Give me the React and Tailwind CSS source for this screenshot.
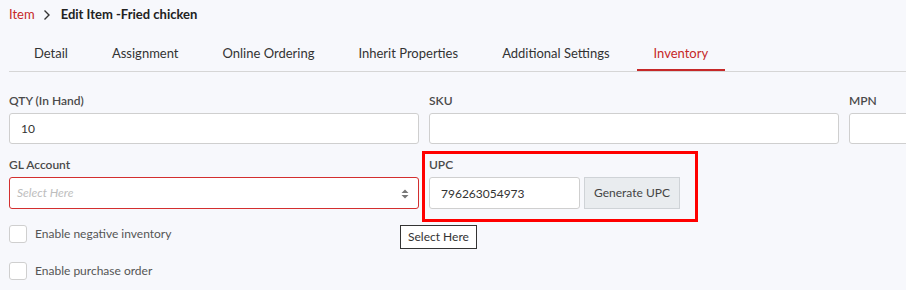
import { useState } from "react";

const tabs = ["Detail", "Assignment", "Online Ordering", "Inherit Properties", "Additional Settings", "Inventory"];

function Field({ label, children }) {
  return (
    <div className="flex flex-col">
      <label className="text-[12px] leading-[15px] font-semibold text-[#4a4a4a] mb-[5px]">{label}</label>
      {children}
    </div>
  );
}

function Check({ label }) {
  const [checked, setChecked] = useState(false);
  return (
    <label className="flex items-center gap-[8px] h-[18px]">
      <input
        type="checkbox"
        checked={checked}
        onChange={(e) => setChecked(e.target.checked)}
        className="appearance-none w-[18px] h-[18px] rounded-[3px] border border-[#cfcfcf] bg-white"
      />
      <span className="text-[12px] text-[#555]">{label}</span>
    </label>
  );
}

function App() {
  const [active, setActive] = useState("Inventory");
  const [qty, setQty] = useState("10");
  const [upc, setUpc] = useState("796263054973");

  return (
    <div className="w-[906px] h-[290px] overflow-hidden bg-[#f7f8fc] px-[9px] text-[#333]" style={{ fontFamily: "Lato, 'Open Sans', sans-serif" }}>
      <div className="flex items-center h-[28px] pt-[1px] text-[13px]">
        <span className="text-[#c62828]">Item</span>
        <svg className="ml-[8px] mr-[10px]" width="8" height="12" viewBox="0 0 8 12">
          <path d="M1.5 1.5 L6 6 L1.5 10.5" fill="none" stroke="#333" strokeWidth="1.4" />
        </svg>
        <span className="font-bold text-[#222]">Edit Item -Fried chicken</span>
      </div>

      <div className="flex gap-[10px] pl-[8px] mt-[10px] border-b border-[#d6d6d6] w-[1200px]">
        {tabs.map((t) => (
          <button
            key={t}
            onClick={() => setActive(t)}
            className={
              t === active
                ? "px-[17px] h-[33px] text-[13px] text-[#c62828] border-b-2 border-[#c62828]"
                : "px-[17px] h-[33px] text-[13px] text-[#333] border-b-2 border-transparent"
            }
          >
            {t}
          </button>
        ))}
      </div>

      <div className="grid grid-cols-[410px_410px_410px] gap-x-[10px] gap-y-[13px] mt-[21px]">
        <Field label="QTY (In Hand)">
          <input
            value={qty}
            onChange={(e) => setQty(e.target.value)}
            className="h-[31px] bg-white border border-[#cfcfcf] rounded-[3px] px-[11px] text-[12px] text-[#333] outline-none"
          />
        </Field>
        <Field label="SKU">
          <input className="h-[31px] bg-white border border-[#cfcfcf] rounded-[3px] px-[11px] text-[12px] outline-none" />
        </Field>
        <Field label="MPN">
          <input className="h-[31px] bg-white border border-[#cfcfcf] rounded-[3px] px-[11px] text-[12px] outline-none" />
        </Field>

        <Field label="GL Account">
          <div className="relative h-[32px] bg-white border border-[#d32f2f] rounded-[3px] flex items-center px-[7px]">
            <span className="italic text-[12px] text-[#bdbdbd]">Select Here</span>
            <svg className="absolute right-[9px] top-[11px]" width="8" height="10" viewBox="0 0 8 10">
              <path d="M4 0.5 L7.5 4 L0.5 4 Z M4 9.5 L7.5 6 L0.5 6 Z" fill="#777" />
            </svg>
          </div>
        </Field>
        <div className="relative">
          <div className="absolute -left-[7px] -top-[6px] w-[276px] h-[71px] border-[3px] border-[#ff0000] pointer-events-none" />
          <Field label="UPC">
            <div className="flex gap-[4px]">
              <input
                value={upc}
                onChange={(e) => setUpc(e.target.value)}
                className="w-[151px] h-[32px] bg-white border border-[#cfcfcf] rounded-[3px] px-[11px] text-[12px] text-[#333] outline-none"
              />
              <button className="w-[96px] h-[32px] bg-[#e9ecef] border border-[#cfd3d7] text-[12px] text-[#444]">
                Generate UPC
              </button>
            </div>
          </Field>
          <div className="absolute left-[-29px] top-[68px] h-[24px] px-[7px] flex items-center bg-white border border-[#333] text-[12px] text-[#333] whitespace-nowrap">
            Select Here
          </div>
        </div>
      </div>

      <div className="flex flex-col gap-[19px] mt-[16px]">
        <Check label="Enable negative inventory" />
        <Check label="Enable purchase order" />
      </div>
    </div>
  );
}

export default App;
